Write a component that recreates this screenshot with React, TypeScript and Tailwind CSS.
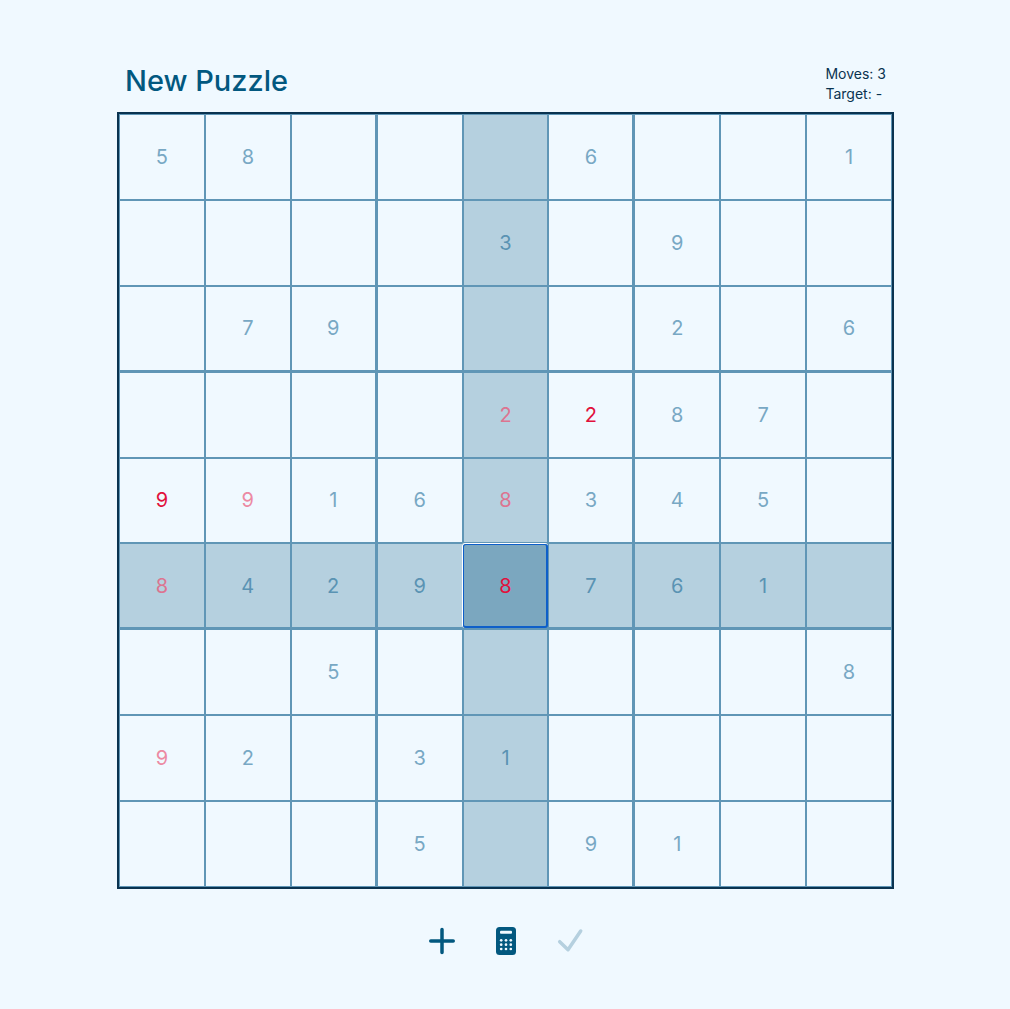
const PUZZLE = [
  "58___6__1",
  "____3_9__",
  "_79___2_6",
  "____2287_",
  "99168345_",
  "84298761_",
  "__5_____8",
  "92_31____",
  "___5_91__",
];

const FADED = new Set(["3-4", "4-1", "4-4", "5-0", "7-0"]);
const RED = new Set(["3-5", "4-0", "5-4"]);

const SELECTED_ROW = 5;
const SELECTED_COL = 4;

function Cell({ row, col, value }: { row: number; col: number; value: string }) {
  const key = `${row}-${col}`;
  const selected = row === SELECTED_ROW && col === SELECTED_COL;
  const highlighted = row === SELECTED_ROW || col === SELECTED_COL;

  let bg = "";
  if (selected) bg = "bg-[#7ba7bf]";
  else if (highlighted) bg = "bg-[#b5d0df]";

  let color = "text-[#78a8c4]";
  if (RED.has(key)) color = "text-[#e1113c]";
  else if (FADED.has(key)) color = highlighted ? "text-[#dd7490]" : "text-[#ec8aa3]";
  else if (highlighted) color = "text-[#5a93b3]";

  const rightEdge = col === 2 || col === 5 ? "border-r-2" : "border-r";
  const bottomEdge = row === 2 || row === 5 ? "border-b-2" : "border-b";

  return (
    <div
      className={`relative flex h-[85.89px] items-center justify-center border-t border-l border-[#6096b6] text-[20px] leading-none ${rightEdge} ${bottomEdge} ${bg} ${color}`}
    >
      {value !== "_" && value}
      {selected && (
        <div className="absolute -top-[1.4px] -right-px -bottom-px -left-[1.4px] rounded-[3px] border-t-[1.5px] border-l-[1.5px] border-white">
          <div className="h-full rounded-[3px] border-2 border-[#0e5fc9] border-t-[1.5px] border-l-[1.5px]" />
        </div>
      )}
    </div>
  );
}

export default function App() {
  return (
    <div className="min-h-[1009px] bg-[#f0f9ff] pt-[62px] pl-[117px] font-['Inter','Noto_Sans',sans-serif]">
      <div className="w-[777px]">
        <div className="flex h-[50px] items-start justify-between pr-2 pl-2">
          <h1 className="mt-[2px] text-[29px] leading-[34px] font-[450] text-[#02587f]">New Puzzle</h1>
          <div className="mt-[2px] text-[14px] leading-5 text-[#0a3350]">
            <div>Moves: 3</div>
            <div>Target: -</div>
          </div>
        </div>
        <div className="grid grid-cols-9 border-2 border-[#0a3350]">
          {PUZZLE.map((line, row) =>
            line.split("").map((value, col) => <Cell key={`${row}-${col}`} row={row} col={col} value={value} />),
          )}
        </div>
        <div className="mt-[38px] flex items-center justify-center gap-[36px]">
          <svg width="28" height="28" viewBox="0 0 28 28" fill="none" stroke="#02587f" strokeWidth="3.5" strokeLinecap="round">
            <path d="M14 2.5v23M2.75 14h22.5" />
          </svg>
          <svg width="28" height="28" viewBox="0 0 28 28">
            <rect x="4" y="0" width="20" height="28" rx="3.5" fill="#02587f" />
            <rect x="8" y="3.7" width="12" height="3" rx="1" fill="#f0f9ff" />
            <g fill="#f0f9ff">
              <circle cx="9.2" cy="13.3" r="1.35" />
              <circle cx="14" cy="13.3" r="1.35" />
              <circle cx="18.8" cy="13.3" r="1.35" />
              <circle cx="9.2" cy="17.7" r="1.35" />
              <circle cx="14" cy="17.7" r="1.35" />
              <circle cx="18.8" cy="17.7" r="1.35" />
              <circle cx="9.2" cy="22" r="1.35" />
              <circle cx="14" cy="22" r="1.35" />
              <circle cx="18.8" cy="22" r="1.35" />
            </g>
          </svg>
          <svg width="28" height="28" viewBox="0 0 28 28" fill="none" stroke="#b5d0df" strokeWidth="3.5" strokeLinecap="round" strokeLinejoin="round">
            <path d="M3.7 14.7l8.3 8L24.7 4" />
          </svg>
        </div>
      </div>
    </div>
  );
}
